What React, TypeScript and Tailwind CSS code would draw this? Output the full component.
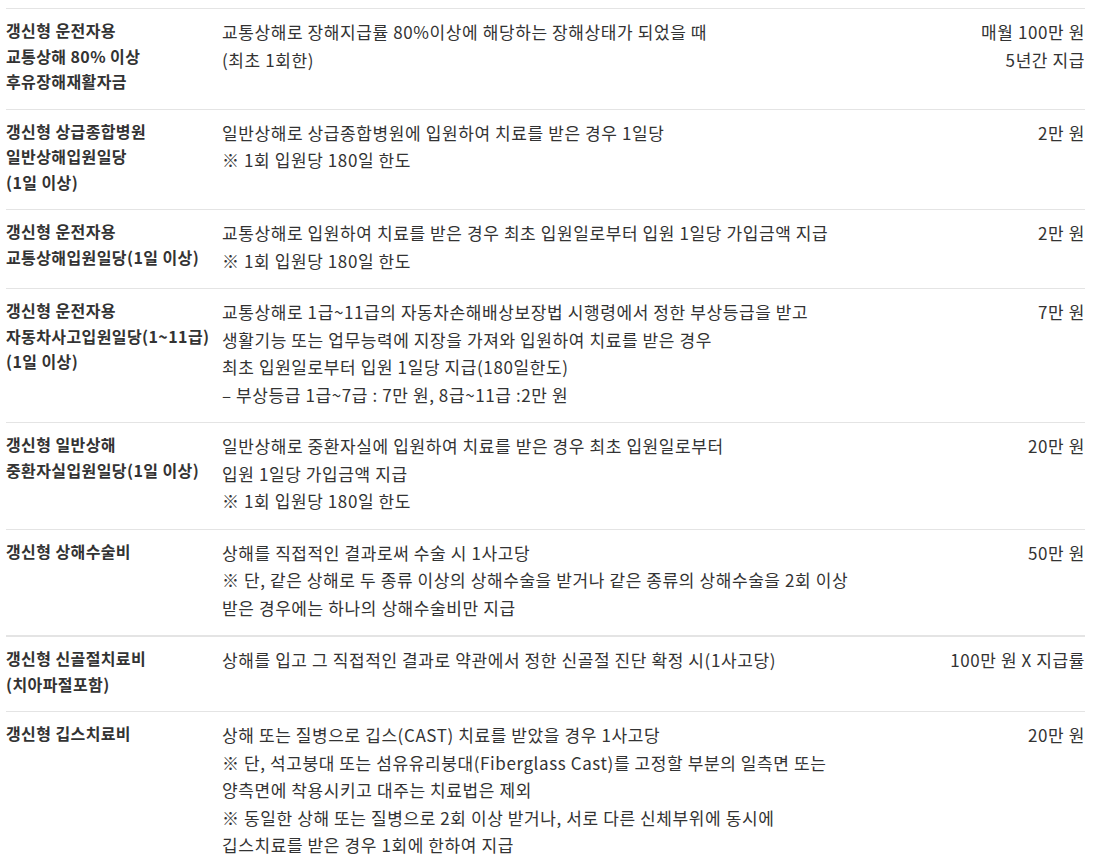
import React from "react";

type Row = { title: string[]; desc: string[]; amount: string[]; thick?: boolean };

const rows: Row[] = [
  {
    title: ["갱신형 운전자용", "교통상해 80% 이상", "후유장해재활자금"],
    desc: ["교통상해로 장해지급률 80%이상에 해당하는 장해상태가 되었을 때", "(최초 1회한)"],
    amount: ["매월 100만 원", "5년간 지급"],
  },
  {
    title: ["갱신형 상급종합병원", "일반상해입원일당", "(1일 이상)"],
    desc: ["일반상해로 상급종합병원에 입원하여 치료를 받은 경우 1일당", "※ 1회 입원당 180일 한도"],
    amount: ["2만 원"],
  },
  {
    title: ["갱신형 운전자용", "교통상해입원일당(1일 이상)"],
    desc: ["교통상해로 입원하여 치료를 받은 경우 최초 입원일로부터 입원 1일당 가입금액 지급", "※ 1회 입원당 180일 한도"],
    amount: ["2만 원"],
  },
  {
    title: ["갱신형 운전자용", "자동차사고입원일당(1~11급)", "(1일 이상)"],
    desc: [
      "교통상해로 1급~11급의 자동차손해배상보장법 시행령에서 정한 부상등급을 받고",
      "생활기능 또는 업무능력에 지장을 가져와 입원하여 치료를 받은 경우",
      "최초 입원일로부터 입원 1일당 지급(180일한도)",
      "– 부상등급 1급~7급 : 7만 원, 8급~11급 :2만 원",
    ],
    amount: ["7만 원"],
  },
  {
    title: ["갱신형 일반상해", "중환자실입원일당(1일 이상)"],
    desc: ["일반상해로 중환자실에 입원하여 치료를 받은 경우 최초 입원일로부터", "입원 1일당 가입금액 지급", "※ 1회 입원당 180일 한도"],
    amount: ["20만 원"],
  },
  {
    title: ["갱신형 상해수술비"],
    desc: [
      "상해를 직접적인 결과로써 수술 시 1사고당",
      "※ 단, 같은 상해로 두 종류 이상의 상해수술을 받거나 같은 종류의 상해수술을 2회 이상",
      "받은 경우에는 하나의 상해수술비만 지급",
    ],
    amount: ["50만 원"],
  },
  {
    title: ["갱신형 신골절치료비", "(치아파절포함)"],
    desc: ["상해를 입고 그 직접적인 결과로 약관에서 정한 신골절 진단 확정 시(1사고당)"],
    amount: ["100만 원 X 지급률"],
    thick: true,
  },
  {
    title: ["갱신형 깁스치료비"],
    desc: [
      "상해 또는 질병으로 깁스(CAST) 치료를 받았을 경우 1사고당",
      "※ 단, 석고붕대 또는 섬유유리붕대(Fiberglass Cast)를 고정할 부분의 일측면 또는",
      "양측면에 착용시키고 대주는 치료법은 제외",
      "※ 동일한 상해 또는 질병으로 2회 이상 받거나, 서로 다른 신체부위에 동시에",
      "깁스치료를 받은 경우 1회에 한하여 지급",
    ],
    amount: ["20만 원"],
  },
];

export default function App() {
  return (
    <div
      className="bg-white w-[1100px] h-[863px] overflow-hidden pt-2 text-[#333]"
      style={{ fontFamily: '"Noto Sans CJK KR", "Noto Sans", sans-serif' }}
    >
      <div className="ml-[6px] w-[1079px]">
        {rows.map((r, i) => (
          <div
            key={i}
            className={`grid grid-cols-[216px_1fr_auto] pt-[9px] pb-[14px] border-t border-[#e4e4e4] ${
              r.thick ? "border-t-2" : ""
            }`}
          >
            <div className="text-[16px] font-bold leading-[25.5px] tracking-[0.4px] whitespace-nowrap">
              {r.title.map((t, j) => (
                <div key={j}>{t}</div>
              ))}
            </div>
            <div className="text-[17px] leading-[27.5px] tracking-[0.6px] whitespace-nowrap">
              {r.desc.map((t, j) => (
                <div key={j}>{t}</div>
              ))}
            </div>
            <div className="text-[17px] leading-[27.5px] text-right tracking-[0.6px] whitespace-nowrap">
              {r.amount.map((t, j) => (
                <div key={j}>{t}</div>
              ))}
            </div>
          </div>
        ))}
      </div>
    </div>
  );
}
